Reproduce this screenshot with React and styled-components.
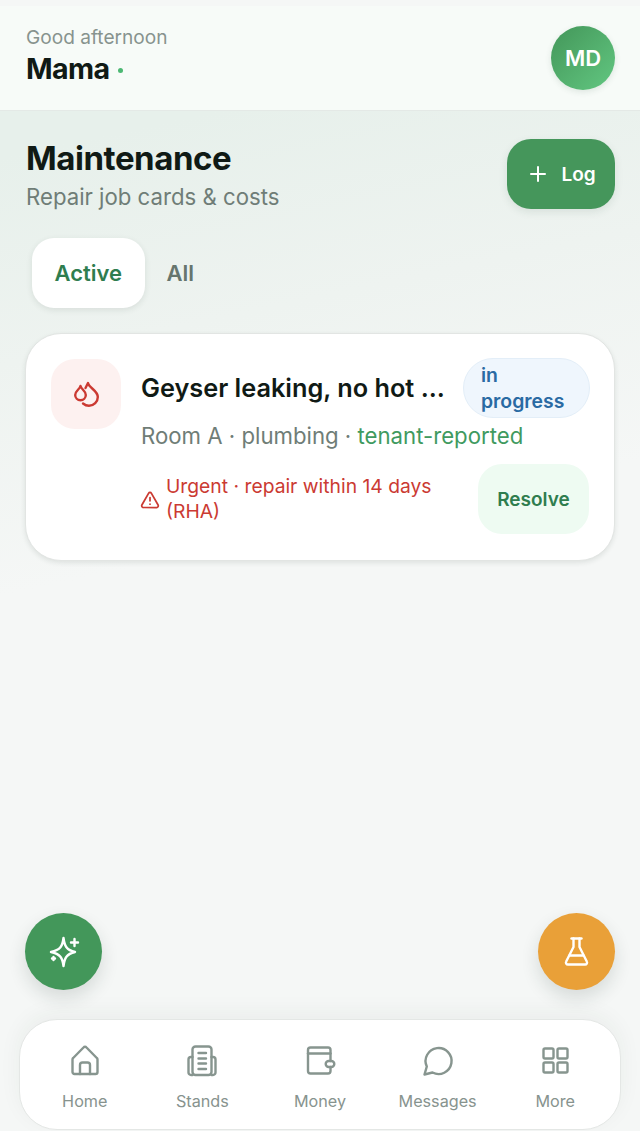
import React from "react";
import styled, { createGlobalStyle } from "styled-components";
import { Plus, TriangleAlert } from "lucide-react";

const GlobalStyle = createGlobalStyle`
  html, body {
    margin: 0;
    padding: 0;
  }
  body {
    font-family: Inter, "Noto Sans", sans-serif;
    background: #f5f7f6;
  }
  * {
    box-sizing: border-box;
  }
`;

const Page = styled.div`
  position: relative;
  width: 640px;
  height: 1131px;
  overflow: hidden;
  padding-top: 6px;
  display: flex;
  flex-direction: column;
  background: #f5f7f6;
`;

const Header = styled.header`
  height: 105px;
  flex-shrink: 0;
  padding: 20px 25px 0 26px;
  display: flex;
  justify-content: space-between;
  align-items: flex-start;
  background: #f7fbf8;
  border-bottom: 1px solid #e4e9e6;
`;

const Greeting = styled.div`
  font-size: 19.1px;
  line-height: 23px;
  color: #87938e;
`;

const Name = styled.div`
  margin-top: 3px;
  display: flex;
  align-items: center;
  gap: 8px;
  font-size: 28.6px;
  line-height: 34px;
  font-weight: 700;
  letter-spacing: -0.6px;
  color: #101a15;
`;

const Dot = styled.span`
  width: 5px;
  height: 5px;
  margin-top: 2px;
  border-radius: 50%;
  background: #4cb873;
`;

const Avatar = styled.div`
  width: 64px;
  height: 64px;
  display: grid;
  place-items: center;
  border-radius: 50%;
  font-size: 22px;
  font-weight: 600;
  color: #fff;
  background: linear-gradient(135deg, #439659, #62c781);
  box-shadow: 0 2px 6px rgba(30, 70, 50, 0.12);
`;

const Main = styled.main`
  flex: 1;
  padding: 28px 25px 0;
  background: linear-gradient(168deg, #e7f0eb 4%, #eef3f0 22%, #f5f7f6 42%);
`;

const TitleRow = styled.div`
  display: flex;
  justify-content: space-between;
  align-items: flex-start;
`;

const Titles = styled.div`
  padding-left: 1px;
`;

const Title = styled.h1`
  margin: 0;
  font-size: 33px;
  line-height: 38px;
  font-weight: 700;
  letter-spacing: -0.45px;
  color: #101a15;
`;

const Subtitle = styled.p`
  margin: 6px 0 0;
  font-size: 22.2px;
  line-height: 27px;
  color: #6f7d77;
`;

const LogButton = styled.button`
  width: 108px;
  height: 70px;
  display: flex;
  align-items: center;
  justify-content: center;
  gap: 11px;
  border: 0;
  border-radius: 24px;
  font: 600 19px Inter, sans-serif;
  color: #fff;
  background: #45965b;
  box-shadow: 0 3px 8px rgba(30, 70, 50, 0.1);
`;

const Tabs = styled.div`
  margin: 28px 0 0 7px;
  display: flex;
  gap: 22px;
  align-items: center;
`;

const Tab = styled.div`
  height: 70px;
  display: flex;
  align-items: center;
  padding: ${(p) => (p.$active ? "0 22.5px" : "0")};
  border-radius: 22px;
  font-size: 22px;
  font-weight: 600;
  color: ${(p) => (p.$active ? "#2f7d4f" : "#66756e")};
  background: ${(p) => (p.$active ? "#fff" : "transparent")};
  box-shadow: ${(p) => (p.$active ? "0 2px 6px rgba(30, 50, 40, 0.1)" : "none")};
`;

const Card = styled.section`
  margin-top: 25px;
  height: 228px;
  padding: 25px 24px 0 25px;
  display: flex;
  gap: 20px;
  background: #fff;
  border: 1px solid #e2e5e3;
  border-radius: 36px;
  box-shadow: 0 2px 5px rgba(30, 50, 40, 0.1);
`;

const IssueIcon = styled.div`
  width: 70px;
  height: 70px;
  flex-shrink: 0;
  display: grid;
  place-items: center;
  border-radius: 24px;
  color: #cb3a32;
  background: #fdf1f0;
`;

const CardBody = styled.div`
  flex: 1;
  min-width: 0;
`;

const CardTop = styled.div`
  display: flex;
  align-items: center;
  justify-content: space-between;
  margin-top: -1px;
`;

const IssueTitle = styled.div`
  font-size: 25.3px;
  line-height: 30px;
  font-weight: 600;
  color: #101a15;
  white-space: nowrap;
`;

const Badge = styled.div`
  width: 127px;
  height: 60px;
  flex-shrink: 0;
  padding: 3px 17px;
  border: 1px solid #e3eef8;
  border-radius: 30px;
  font-size: 19.4px;
  line-height: 26px;
  font-weight: 600;
  color: #2a6aa3;
  background: #eff6fd;
`;

const Meta = styled.div`
  margin-top: 4px;
  font-size: 22.2px;
  line-height: 28px;
  color: #6f7d77;
`;

const Reported = styled.span`
  color: #3f9a60;
`;

const CardBottom = styled.div`
  margin-top: 14px;
  padding-right: 1px;
  display: flex;
  align-items: center;
  justify-content: space-between;
`;

const Warning = styled.div`
  width: 300px;
  display: flex;
  align-items: center;
  gap: 6px;
  font-size: 19.3px;
  line-height: 25px;
  color: #cb3a32;

  svg {
    flex-shrink: 0;
    margin: 2px 0 0 -1px;
  }
`;

const ResolveButton = styled.button`
  width: 111px;
  height: 70px;
  padding: 0;
  border: 0;
  border-radius: 24px;
  font: 600 19px Inter, sans-serif;
  color: #2f7d4f;
  background: #eefbf2;
`;

const Fab = styled.button`
  position: absolute;
  top: 913px;
  ${(p) => (p.$side === "left" ? "left: 25px;" : "right: 25px;")}
  width: 77px;
  height: 77px;
  display: grid;
  place-items: center;
  padding: 0;
  border: 0;
  border-radius: 50%;
  color: #fff;
  background: ${(p) => p.$color};
  box-shadow: 0 8px 18px rgba(30, 50, 40, 0.14);
`;

const FabIcon = styled.svg`
  width: 34px;
  height: 34px;
  fill: none;
  stroke: #fff;
  stroke-width: 2.4;
  stroke-linecap: round;
  stroke-linejoin: round;
`;

const Nav = styled.nav`
  position: absolute;
  left: 19px;
  top: 1019px;
  width: 602px;
  height: 111px;
  padding: 24px 6px 0;
  display: grid;
  grid-template-columns: repeat(5, 1fr);
  background: #fff;
  border: 1px solid #e4e7e5;
  border-radius: 38px;
  box-shadow: 0 -6px 22px rgba(30, 50, 40, 0.05);
`;

const NavItem = styled.div`
  display: flex;
  flex-direction: column;
  align-items: center;
  gap: 13px;
  font-size: 16.2px;
  line-height: 20px;
  color: #87938e;
`;

const NavIcon = styled.svg`
  width: 34px;
  height: 34px;
  fill: none;
  stroke: #87958f;
  stroke-width: 2.4;
  stroke-linecap: round;
  stroke-linejoin: round;
`;

const navItems = [
  {
    label: "Home",
    icon: (
      <>
        <path d="M4.500 28V15.500a2 2 0 0 1 .7-1.500L15.500 3.500a2 2 0 0 1 3 0L28.800 14a2 2 0 0 1 .7 1.500V28a2 2 0 0 1-2 2H6.500a2 2 0 0 1-2-2Z" />
        <path d="M12 30V21a2.500 2.500 0 0 1 2.500-2.500h5A2.500 2.500 0 0 1 22 21v9" />
      </>
    ),
  },
  {
    label: "Stands",
    icon: (
      <>
        <rect x="7.500" y="2.500" width="19" height="28.500" rx="3" />
        <path d="M7.500 13H6a2.500 2.500 0 0 0-2.500 2.500v13A2.500 2.500 0 0 0 6 31h1.500" />
        <path d="M26.500 13H28a2.500 2.500 0 0 1 2.500 2.500v13A2.500 2.500 0 0 1 28 31h-1.500" />
        <path d="M13.500 9H21M13.500 14.500H21M13.500 19.500H21M13.500 25H21" />
      </>
    ),
  },
  {
    label: "Money",
    icon: (
      <>
        <path d="M27.500 17V6a2.500 2.500 0 0 0-2.500-2.500H7.500A2.500 2.500 0 0 0 5 6v21a2.500 2.500 0 0 0 2.500 2.500H25a2.500 2.500 0 0 0 2.500-2.500v-4" />
        <path d="M5 9.500H27.500" />
        <rect x="22.700" y="17" width="8.600" height="6" rx="3" />
      </>
    ),
  },
  {
    label: "Messages",
    icon: <path d="M3.500 30.500L5.800 22.500A13 13 0 1 1 11.500 28.500L3.500 30.500Z" />,
  },
  {
    label: "More",
    icon: (
      <>
        <rect x="5.500" y="4.500" width="10" height="10" rx="1.500" />
        <rect x="19.500" y="4.500" width="10" height="10" rx="1.500" />
        <rect x="5.500" y="18.500" width="10" height="10" rx="1.500" />
        <rect x="19.500" y="18.500" width="10" height="10" rx="1.500" />
      </>
    ),
  },
];

const DropsIcon = () => (
  <svg width="28" height="28" viewBox="0 0 28 28" fill="none" stroke="currentColor" strokeWidth="2.4" strokeLinecap="round" strokeLinejoin="round">
    <path d="M8.500 6C7.700 9.500 3.200 10.700 3.200 15a5.300 5.300 0 0 0 10.600 0C13.800 10.700 9.300 9.500 8.500 6Z" />
    <path d="M13.500 8L16 3C17 8 25.800 10.500 25.800 17A8.800 8.800 0 0 1 17 25.800C14.800 25.800 12.800 25 11 23.500" />
  </svg>
);

export default function App() {
  return (
    <Page>
      <GlobalStyle />
      <Header>
        <div>
          <Greeting>Good afternoon</Greeting>
          <Name>
            Mama <Dot />
          </Name>
        </div>
        <Avatar>MD</Avatar>
      </Header>

      <Main>
        <TitleRow>
          <Titles>
            <Title>Maintenance</Title>
            <Subtitle>Repair job cards &amp; costs</Subtitle>
          </Titles>
          <LogButton>
            <Plus size={24} strokeWidth={2} />
            Log
          </LogButton>
        </TitleRow>

        <Tabs>
          <Tab $active>Active</Tab>
          <Tab>All</Tab>
        </Tabs>

        <Card>
          <IssueIcon>
            <DropsIcon />
          </IssueIcon>
          <CardBody>
            <CardTop>
              <IssueTitle>Geyser leaking, no hot ...</IssueTitle>
              <Badge>in progress</Badge>
            </CardTop>
            <Meta>
              Room A · plumbing · <Reported>tenant-reported</Reported>
            </Meta>
            <CardBottom>
              <Warning>
                <TriangleAlert size={20} strokeWidth={2.1} />
                <span>Urgent · repair within 14 days (RHA)</span>
              </Warning>
              <ResolveButton>Resolve</ResolveButton>
            </CardBottom>
          </CardBody>
        </Card>
      </Main>

      <Fab $side="left" $color="#43975a">
        <FabIcon viewBox="0 0 34 34">
          <path d="M16.500 3C17.500 11 19.500 15 28 17C19.500 19 17.500 23 16.500 31C15.500 23 13.500 19 4 17C13.500 15 15.500 11 16.500 3Z" />
          <path d="M27.500 4V11M24 7.500H31" />
          <path d="M6.500 22V25M5 23.500H8" />
        </FabIcon>
      </Fab>
      <Fab $side="right" $color="#e9a038">
        <FabIcon viewBox="0 0 34 34">
          <path d="M13.500 3.500V12L6.200 26.500a2 2 0 0 0 1.800 3H25a2 2 0 0 0 1.800-3L19.500 12V3.500" />
          <path d="M11.500 3.500H21.500" />
          <path d="M9.500 20.500H23.500" />
        </FabIcon>
      </Fab>

      <Nav>
        {navItems.map((item) => (
          <NavItem key={item.label}>
            <NavIcon viewBox="0 0 34 34">{item.icon}</NavIcon>
            {item.label}
          </NavItem>
        ))}
      </Nav>
    </Page>
  );
}
